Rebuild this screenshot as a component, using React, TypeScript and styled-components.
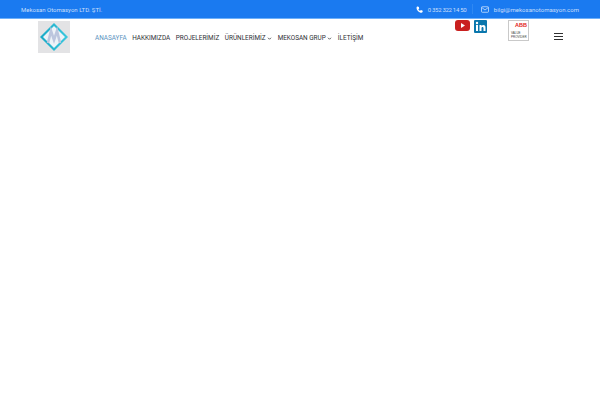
import React from "react";
import styled, { createGlobalStyle } from "styled-components";

const Global = createGlobalStyle`
  html, body { margin: 0; padding: 0; background: #fff; }
  body { width: 600px; height: 400px; overflow: hidden; font-family: Roboto, "Liberation Sans", sans-serif; }
`;
const Page = styled.div`width: 600px; height: 400px; background: #fff;`;
const TopBar = styled.div`
  height: 18px; border-bottom: 1px solid #6db0fa; background: #1a7af0;
  display: flex; align-items: center; justify-content: space-between;
  padding: 0 21px; color: #c9dffb; font-size: 6px;
`;
const Contacts = styled.div`display: flex; align-items: center;`;
const Contact = styled.div`display: flex; align-items: center; gap: 4.5px; white-space: nowrap;`;
const Phone = styled.span`letter-spacing: -0.3px;`;
const Email = styled.span`letter-spacing: 0.03px;`;
const Divider = styled.span`width: 1px; height: 10px; background: #2f88f2; margin: 0 8px 0 6px;`;
const Header = styled.header`display: flex; align-items: flex-start; height: 40px;`;
const LogoBox = styled.div`width: 32px; height: 32px; margin: 2px 0 0 38px; background: #e3e3e5; flex: none;`;
const Nav = styled.nav`display: flex; align-items: center; height: 10px; margin: 14px 0 0 25px; width: 360px; flex: none; gap: 5.6px;`;
const NavItem = styled.a<{ $active?: boolean }>`
  display: flex; align-items: center; gap: 1.5px; white-space: nowrap;
  font-size: 6.4px; color: ${p => (p.$active ? "#5b93c0" : "#2c2f33")};
`;
const Social = styled.div`display: flex; gap: 4px; margin-top: 1px; width: 53px; flex: none;`;
const AbbCard = styled.div`
  width: 21px; height: 21px; margin-top: 1px; box-sizing: border-box; border: 1px solid #c9c9c9;
  background: #fff; color: #e2231a; flex: none; padding: 1px 1px 1px 2px;
  display: flex; flex-direction: column; font-family: "Liberation Sans", sans-serif;
`;
const AbbMark = styled.div`font-size: 5.5px; font-weight: 700; line-height: 6px; text-align: right;`;
const AbbText = styled.div`font-size: 3px; line-height: 3.5px; color: #444; margin-top: 4px;`;
const Burger = styled.button`
  border: 0; padding: 0; background: none; width: 9px; height: 7px; margin: 14px 0 0 25px;
  display: flex; flex-direction: column; justify-content: space-between; flex: none;
`;
const BurgerLine = styled.span`display: block; height: 1px; background: #303030;`;

const Chevron = () => (
  <svg width="5" height="5" viewBox="0 0 10 10" fill="none" stroke="#33363a" strokeWidth="1.6">
    <path d="M2 3.5 5 6.5 8 3.5" />
  </svg>
);

export default function App() {
  return (
    <Page>
      <Global />
      <TopBar>
        <span>Mekosan Otomasyon LTD. ŞTİ.</span>
        <Contacts>
          <Contact>
            <svg width="7" height="7" viewBox="0 0 24 24" fill="#fff">
              <path d="M6 2l4 1 1 6-3 2c1 3 3 5 6 6l2-3 6 1 1 4c0 2-2 4-4 4C10 23 1 14 2 5c0-2 2-3 4-3z" />
            </svg>
            <Phone>0 352 322 14 50</Phone>
          </Contact>
          <Divider />
          <Contact>
            <svg width="8" height="7" viewBox="0 0 16 14" fill="none" stroke="#e3efff" strokeWidth="1.4">
              <rect x="1" y="1.5" width="14" height="11" rx="1.5" />
              <path d="M1.500 3 8 8l6.500-5" />
            </svg>
            <Email>bilgi@mekosanotomasyon.com</Email>
          </Contact>
        </Contacts>
      </TopBar>
      <Header>
        <LogoBox>
          <svg width="32" height="32" viewBox="0 0 32 32">
            <defs>
              <linearGradient id="logoEdge" x1="0" y1="0" x2="1" y2="0">
                <stop offset="0" stopColor="#19a9c6" />
                <stop offset="1" stopColor="#3cc8de" />
              </linearGradient>
            </defs>
            <path d="M16 2 30 16 16 30 2 16Z" fill="url(#logoEdge)" />
            <path d="M16 5 27 16 16 27 5 16Z" fill="#eef3f8" />
            <path d="M10 22 13 10 16 19 19 10 22 22" fill="none" stroke="#bcc6de" strokeWidth="2.600" />
          </svg>
        </LogoBox>
        <Nav>
          <NavItem $active>ANASAYFA</NavItem>
          <NavItem>HAKKIMIZDA</NavItem>
          <NavItem>PROJELERİMİZ</NavItem>
          <NavItem>ÜRÜNLERİMİZ <Chevron /></NavItem>
          <NavItem>MEKOSAN GRUP <Chevron /></NavItem>
          <NavItem>İLETİŞİM</NavItem>
        </Nav>
        <Social>
          <svg width="15" height="11" viewBox="0 0 15 11">
            <rect width="15" height="11" rx="3" fill="#c9201f" />
            <path d="M6 3l4 2.500-4 2.500z" fill="#fff" />
          </svg>
          <svg width="13" height="13" viewBox="0 0 13 13">
            <rect width="13" height="13" rx="1" fill="#0a77ad" />
            <rect x="2" y="5" width="2" height="6" fill="#fff" />
            <circle cx="3" cy="3" r="1.200" fill="#fff" />
            <path d="M5.500 5h2v1c1-1.500 4-1.500 4 1.500V11h-2V8c0-1.500-2-1.500-2 0v3h-2z" fill="#fff" />
          </svg>
        </Social>
        <AbbCard>
          <AbbMark>ABB</AbbMark>
          <AbbText>VALUE<br />PROVIDER</AbbText>
        </AbbCard>
        <Burger aria-label="Menu">
          <BurgerLine />
          <BurgerLine />
          <BurgerLine />
        </Burger>
      </Header>
    </Page>
  );
}
